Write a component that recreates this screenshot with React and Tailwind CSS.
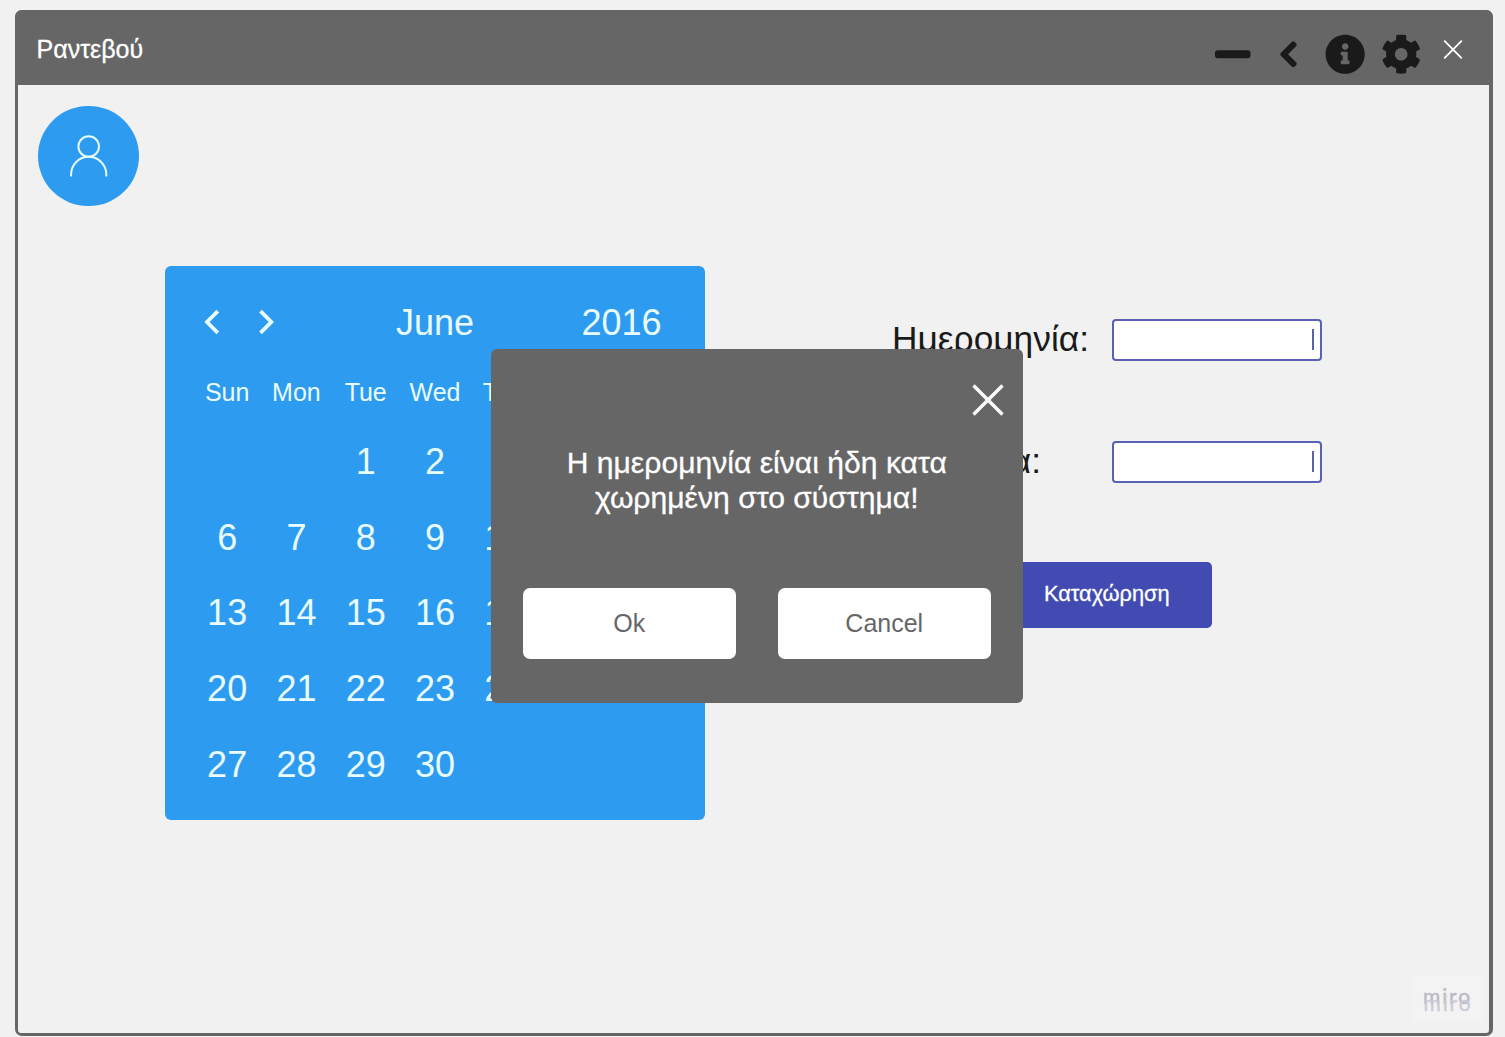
import React from "react";
import { FaChevronLeft, FaCog, FaInfoCircle } from "react-icons/fa";

const WEEKDAYS = ["Sun", "Mon", "Tue", "Wed", "Thu", "Fri", "Sat"];
const DAYS = [
  "", "", "1", "2", "3", "4", "5",
  "6", "7", "8", "9", "10", "11", "12",
  "13", "14", "15", "16", "17", "18", "19",
  "20", "21", "22", "23", "24", "25", "26",
  "27", "28", "29", "30", "", "", "",
];
const HIDDEN_COLUMNS_START = 5;

function TitleBar() {
  return (
    <header className="flex h-[75px] shrink-0 items-start bg-[#666666] pl-[21.5px] pr-[30px]">
      <h1 className="mt-[25px] text-[25px] leading-[29px] text-white [-webkit-text-stroke:0.3px_white]">Ραντεβού</h1>
      <div className="ml-auto flex text-[#1a1a1a]">
        <svg className="mt-[40px] h-[9px] w-[36px]" viewBox="0 0 36 9" fill="currentColor">
          <rect x="0" y="0.2" width="35.4" height="8" rx="2.6" />
        </svg>
        <FaChevronLeft className="ml-[28px] mt-[30px] h-[28.5px] w-[19px] overflow-visible [stroke-width:30px]" />
        <FaInfoCircle className="ml-[27px] mt-[24px] h-[40.4px] w-[40.4px]" />
        <FaCog className="ml-[15.5px] mt-[24px] h-[40.4px] w-[40.4px]" />
        <svg className="ml-[21.1px] mt-[29px] h-[21px] w-[20px]" viewBox="0 0 20 21" stroke="white" strokeWidth="1.8">
          <path d="M1.2 1.7 18.8 19.3M18.8 1.7 1.2 19.3" />
        </svg>
      </div>
    </header>
  );
}

function Avatar() {
  return (
    <div className="flex h-[100.5px] w-[100.5px] items-center justify-center rounded-full bg-[#2d9bf0]">
      <svg className="h-[44px] w-[40px]" viewBox="0 0 40 44" fill="none" stroke="#e4fbff" strokeWidth="2">
        <circle cx="20.7" cy="12.5" r="10.3" />
        <path d="M3.1 42.6v-2.2a17.6 17.6 0 0 1 35.2 0v2.2" />
      </svg>
    </div>
  );
}

function Calendar() {
  return (
    <section className="h-[554px] w-[540px] rounded-[6px] bg-[#2d9bf0] px-[27.5px] pt-[36px] text-[#e9fcff]">
      <div className="grid h-[42px] grid-cols-3 items-center text-[36px] leading-[42px]">
        <svg className="-mt-[2px] ml-[10px] h-[26px] w-[72px]" viewBox="0 0 72 26" fill="none" stroke="currentColor" strokeWidth="3.8">
          <path d="M14.8 2.2 4 13l10.8 10.8M57.5 2.2 68.3 13 57.5 23.8" />
        </svg>
        <span className="text-center">June</span>
        <span className="pr-[16px] text-right">2016</span>
      </div>
      <div className="mt-[33px] grid grid-cols-7 text-center text-[25px] leading-[30px]">
        {WEEKDAYS.map((day, i) => (
          <span key={day}>{i < HIDDEN_COLUMNS_START ? day : ""}</span>
        ))}
      </div>
      <div className="mt-[17.3px] grid auto-rows-[75.7px] grid-cols-7 text-center text-[36px] leading-[75.7px]">
        {DAYS.map((day, i) => (
          <span key={i}>{i % 7 < HIDDEN_COLUMNS_START ? day : ""}</span>
        ))}
      </div>
    </section>
  );
}

function DateField({ label, labelClass }) {
  return (
    <label className="flex h-[42px] items-center">
      <span className={`-mt-[2px] whitespace-nowrap text-[35.3px] leading-[40px] text-[#1a1a1a] ${labelClass}`}>{label}</span>
      <span className="ml-auto flex h-[42px] w-[210px] items-center justify-end rounded-[4px] border-2 border-[#5961b3] bg-white pr-[6px]">
        <span className="h-[21px] w-[2px] bg-[#5a62a5]" />
      </span>
    </label>
  );
}

function AppointmentForm() {
  return (
    <form className="ml-[187px] mt-[53px] flex w-[429.5px] flex-col">
      <DateField label="Ημερομηνία:" labelClass="" />
      <div className="h-[80px]" />
      <DateField label="Ώρα:" labelClass="w-[149px] text-right" />
      <button type="button" className="ml-[109.5px] mt-[79.7px] h-[65.5px] w-[210.5px] rounded-[5px] bg-[#414bb2] pb-[2px] text-[21.8px] text-white [-webkit-text-stroke:0.3px_white]">
        Καταχώρηση
      </button>
    </form>
  );
}

function Dialog() {
  return (
    <div role="dialog" className="absolute left-[491px] top-[349px] flex h-[354px] w-[531.5px] flex-col rounded-[6px] bg-[#666666]">
      <svg className="ml-auto mr-[18.5px] mt-[35px] h-[32px] w-[32px]" viewBox="0 0 32 32" stroke="white" strokeWidth="3.4">
        <path d="M1.5 1.5 30.5 30.5M30.5 1.5 1.5 30.5" />
      </svg>
      <p className="mt-[29px] text-center text-[30.1px] leading-[35px] text-white [-webkit-text-stroke:0.3px_white]">
        Η ημερομηνία είναι ήδη κατα
        <br />
        χωρημένη στο σύστημα!
      </p>
      <div className="mt-[73px] flex justify-between px-[32px] text-[25px] text-[#666666]">
        <button type="button" className="h-[71px] w-[212.5px] rounded-[7px] bg-white">Ok</button>
        <button type="button" className="h-[71px] w-[212.5px] rounded-[7px] bg-white">Cancel</button>
      </div>
    </div>
  );
}

function Watermark() {
  return (
    <div className="absolute left-[1412px] top-[976px] flex h-[45px] w-[71px] flex-col items-center rounded-[3px] bg-[#f3f3f3] pt-[9px] font-[Lato,sans-serif] text-[21px] leading-[22px] tracking-[1.9px]">
      <span className="text-[#b9b9c6] [-webkit-text-stroke:0.4px_#b9b9c6]">miro</span>
      <span aria-hidden="true" className="-mt-[15px] ml-px text-[#c9c9d4]/90 [-webkit-text-stroke:0.4px_#c9c9d4]">miro</span>
    </div>
  );
}

export default function App() {
  return (
    <div className="relative h-[1037px] w-[1505px] overflow-hidden bg-[#f1f1f1] pl-[15px] pt-[10px] font-['Liberation_Sans',Arial,sans-serif]">
      <main className="flex h-[1026px] w-[1477.5px] flex-col overflow-hidden rounded-[7px] bg-[#666666]">
        <TitleBar />
        <div className="mb-[3px] ml-[3px] mr-[3.5px] flex-1 rounded-b-[3px] bg-[#f1f1f1] pl-[20px] pt-[20.5px]">
          <Avatar />
          <div className="ml-[127px] mt-[59.8px] flex items-start">
            <Calendar />
            <AppointmentForm />
          </div>
        </div>
      </main>
      <Dialog />
      <Watermark />
    </div>
  );
}
